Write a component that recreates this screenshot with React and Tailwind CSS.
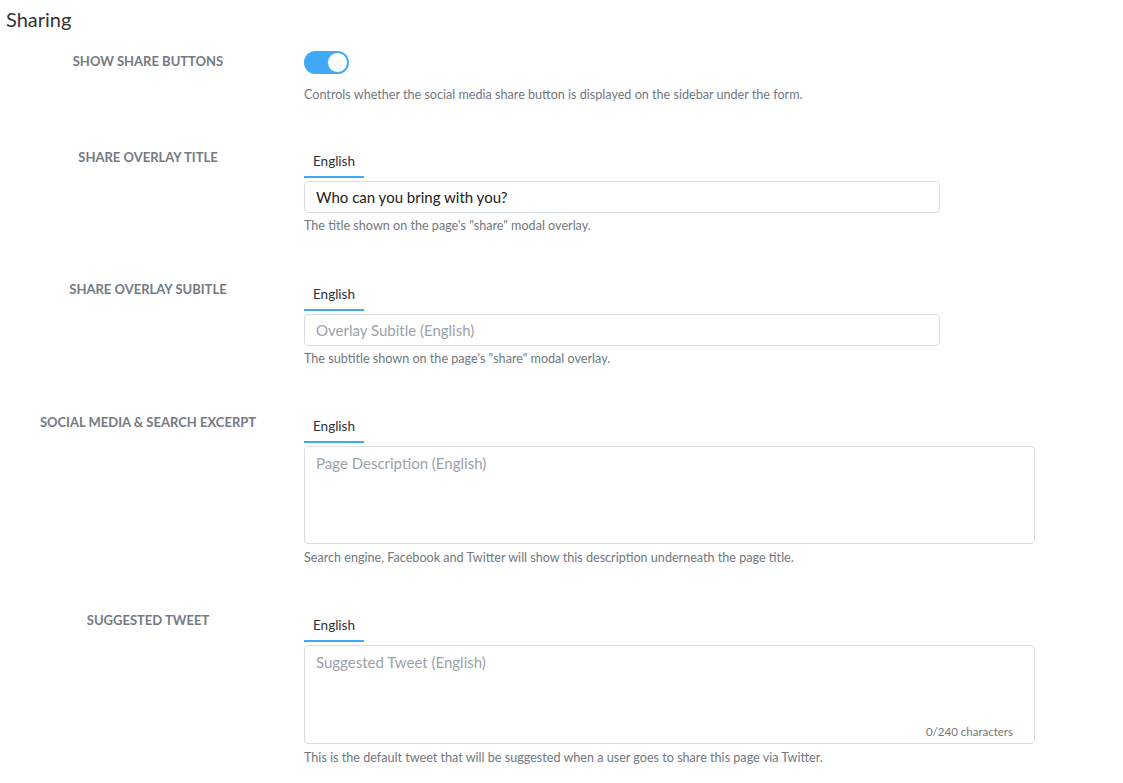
import React, { useState } from 'react';

const font = { fontFamily: 'Lato, "Open Sans", sans-serif' };

function Label({ children, className = '' }) {
  return (
    <div className={`mr-[8px] w-[296px] shrink-0 text-center text-[13px] leading-4 font-bold uppercase text-[#737a83] ${className}`}>
      {children}
    </div>
  );
}

function Help({ children, className = 'mt-[5px]' }) {
  return <p className={`${className} text-[12.6px] leading-4 text-[#717880]`}>{children}</p>;
}

function Tab() {
  return (
    <div className="flex">
      <div className="w-[60px] border-b-2 border-[#3fa9f5] pt-[3px] pb-[7px] text-center text-[13.5px] leading-4 text-[#2d3238]">
        English
      </div>
    </div>
  );
}

export default function App() {
  const [share, setShare] = useState(true);

  return (
    <div className="min-h-screen bg-white text-[#2d3238]" style={font}>
      <h1 className="pl-[6px] pt-[6px] text-[20px] leading-[26px] text-[#333]">Sharing</h1>

      <div className="mt-[18px] flex flex-col">
        <div className="flex">
          <Label className="pt-[3px]">Show share buttons</Label>
          <div className="flex-1">
            <button
              onClick={() => setShare(!share)}
              className={`relative mt-[1px] block h-[23px] w-[45px] rounded-full ${share ? 'bg-[#3fa9f5]' : 'bg-[#d5d9de]'}`}
            >
              <span
                className={`absolute top-[1px] h-[21px] w-[21px] rounded-full border border-[#3fa9f5] bg-white ${share ? 'right-[1px]' : 'left-[1px]'}`}
              />
            </button>
            <Help className="mt-[13px]">
              Controls whether the social media share button is displayed on the sidebar under the form.
            </Help>
          </div>
        </div>

        <div className="mt-[47px] flex">
          <Label className="-mt-[1px]">Share overlay title</Label>
          <div className="flex-1">
            <Tab />
            <input
              defaultValue="Who can you bring with you?"
              className="mt-[3px] block h-[32px] w-[636px] rounded-[4px] border border-[#d9dce0] px-[11px] text-[15px] text-[#222] outline-none"
            />
            <Help>The title shown on the page's "share" modal overlay.</Help>
          </div>
        </div>

        <div className="mt-[49px] flex">
          <Label className="-mt-[2px]">Share overlay subitle</Label>
          <div className="flex-1">
            <Tab />
            <input
              placeholder="Overlay Subitle (English)"
              className="mt-[3px] block h-[32px] w-[636px] rounded-[4px] border border-[#d9dce0] px-[11px] text-[15px] text-[#222] outline-none placeholder:text-[#9ba2aa]"
            />
            <Help>The subtitle shown on the page's "share" modal overlay.</Help>
          </div>
        </div>

        <div className="mt-[48px] flex">
          <Label className="-mt-[1px]">Social media &amp; search excerpt</Label>
          <div className="flex-1">
            <Tab />
            <textarea
              placeholder="Page Description (English)"
              className="mt-[3px] block h-[98px] w-[731px] resize-none rounded-[4px] border border-[#d9dce0] px-[11px] pt-[6px] text-[15px] leading-5 text-[#222] outline-none placeholder:text-[#9ba2aa]"
            />
            <Help className="mt-[6px]">Search engine, Facebook and Twitter will show this description underneath the page title.</Help>
          </div>
        </div>

        <div className="mt-[48px] flex">
          <Label className="-mt-[2px]">Suggested tweet</Label>
          <div className="flex-1">
            <Tab />
            <div className="relative mt-[3px] w-[731px]">
              <textarea
                placeholder="Suggested Tweet (English)"
                className="block h-[99px] w-full resize-none rounded-[4px] border border-[#d9dce0] px-[11px] pt-[6px] text-[15px] leading-5 text-[#222] outline-none placeholder:text-[#9ba2aa]"
              />
              <span className="absolute bottom-[4px] right-[22px] text-[11.5px] leading-4 text-[#717880]">0/240 characters</span>
            </div>
            <Help className="mt-[6px]">
              This is the default tweet that will be suggested when a user goes to share this page via Twitter.
            </Help>
          </div>
        </div>
      </div>
    </div>
  );
}
